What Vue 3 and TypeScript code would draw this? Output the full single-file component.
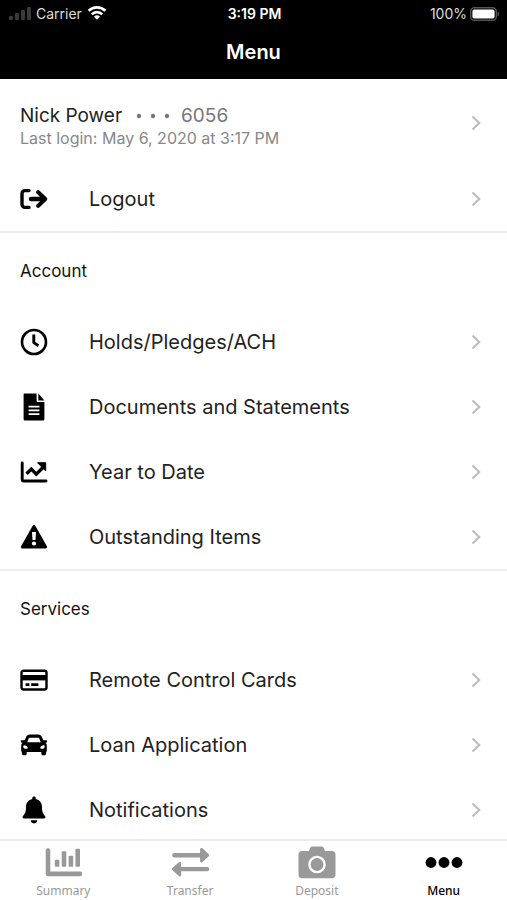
<script setup lang="ts">
import { ref } from 'vue'

type IconName = 'logout' | 'clock' | 'document' | 'chart' | 'warning' | 'card' | 'car' | 'bell'

interface MenuItem {
  label: string
  icon: IconName
}

interface MenuSection {
  title: string
  items: MenuItem[]
}

type TabName = 'Summary' | 'Transfer' | 'Deposit' | 'Menu'

const sections: MenuSection[] = [
  { title: '', items: [{ label: 'Logout', icon: 'logout' }] },
  {
    title: 'Account',
    items: [
      { label: 'Holds/Pledges/ACH', icon: 'clock' },
      { label: 'Documents and Statements', icon: 'document' },
      { label: 'Year to Date', icon: 'chart' },
      { label: 'Outstanding Items', icon: 'warning' },
    ],
  },
  {
    title: 'Services',
    items: [
      { label: 'Remote Control Cards', icon: 'card' },
      { label: 'Loan Application', icon: 'car' },
      { label: 'Notifications', icon: 'bell' },
    ],
  },
]

const tabs: TabName[] = ['Summary', 'Transfer', 'Deposit', 'Menu']
const activeTab = ref<TabName>('Menu')
</script>

<template>
  <div class="app">
    <header class="top">
      <div class="status">
        <div class="status-left">
          <svg class="signal" viewBox="0 0 22 14" aria-hidden="true">
            <rect x="0" y="9" width="4" height="4" rx="1" />
            <rect x="6" y="6" width="4" height="7" rx="1" />
            <rect x="12" y="3" width="4" height="10" rx="1" />
            <rect x="18" y="0" width="4" height="13" rx="1" />
          </svg>
          <span>Carrier</span>
          <svg class="wifi" viewBox="0 0 20 15" aria-hidden="true">
            <path d="M1.6 4.8a12 12 0 0 1 16.8 0M4.800 8.300a7.400 7.400 0 0 1 10.400 0" fill="none" stroke="#fff" stroke-width="2.600" />
            <path d="M10 13.800l-3-3.100a4.300 4.300 0 0 1 6 0z" fill="#fff" />
          </svg>
        </div>
        <span class="time">3:19 PM</span>
        <div class="status-right">
          <span>100%</span>
          <svg class="battery" viewBox="0 0 30 14" aria-hidden="true">
            <rect x="0.7" y="0.7" width="25.6" height="12.6" rx="3.6" fill="none" stroke="#555" stroke-width="1.4" />
            <rect x="2.4" y="2.4" width="22.2" height="9.2" rx="2" fill="#fff" />
            <path d="M27.6 4.6a2.6 2.6 0 0 1 0 4.8z" fill="#555" />
          </svg>
        </div>
      </div>
      <h1>Menu</h1>
    </header>

    <main class="content">
      <button type="button" class="row profile">
        <span class="profile-text">
          <span class="name-line">
            <span>Nick Power</span>
            <span class="member">
              <svg class="mask" viewBox="0 0 34 6" aria-hidden="true">
                <circle cx="3" cy="3" r="2.2" />
                <circle cx="17" cy="3" r="2.2" />
                <circle cx="31" cy="3" r="2.2" />
              </svg>
              <span>6056</span>
            </span>
          </span>
          <span class="last-login">Last login: May 6, 2020 at 3:17 PM</span>
        </span>
        <svg class="chevron" viewBox="0 0 10 16" aria-hidden="true"><path d="M1.5 1.5L8.3 8l-6.8 6.5" /></svg>
      </button>

      <section v-for="section in sections" :key="section.title" class="section">
        <h2 v-if="section.title">{{ section.title }}</h2>
        <button v-for="item in section.items" :key="item.label" type="button" class="row">
          <svg class="icon" viewBox="0 0 28 28" aria-hidden="true">
            <g v-if="item.icon === 'logout'" fill="none" stroke="#000" stroke-linecap="round">
              <path d="M9 5.600H5a3 3 0 0 0-3 3v10.800a3 3 0 0 0 3 3h4" stroke-width="3.400" />
              <path d="M11 14h12" stroke-width="4.400" />
              <path d="M18.200 7.200l7 6.800-7 6.800" stroke-width="4" stroke-linejoin="round" />
            </g>
            <g v-else-if="item.icon === 'clock'" fill="none" stroke="#000">
              <circle cx="14" cy="14" r="12" stroke-width="2.6" />
              <path d="M13.8 6.500v8.100l4.6 3.200" stroke-width="2.900" />
            </g>
            <g v-else-if="item.icon === 'document'">
              <path d="M5 .6h11.6v7.2c0 .8.5 1.3 1.3 1.3h6.5v16.8c0 .9-.5 1.5-1.4 1.5H5c-.9 0-1.4-.6-1.4-1.5V2C3.600 1.100 4.100.6 5 .6z" />
              <path d="M18.300.6l6.100 6.800h-6.100z" />
              <path d="M8.600 13.600h10.800M8.600 17.400h10.800M8.600 21.200h10.800" stroke="#fff" stroke-width="1.700" />
            </g>
            <g v-else-if="item.icon === 'chart'" fill="none" stroke="#000">
              <path d="M2.200 5v16.500c0 1 .5 1.500 1.500 1.500H26" stroke-width="2.900" stroke-linecap="round" />
              <path d="M6.600 15.800l4.700-4.700 5 5 6.400-6.400" stroke-width="3.400" />
              <path d="M17.500 4.700h8.200v8.200z" fill="#000" stroke-width="1" stroke-linejoin="round" />
            </g>
            <g v-else-if="item.icon === 'warning'">
              <path d="M14 3.500L25.600 24H2.400z" stroke="#000" stroke-width="3" stroke-linejoin="round" />
              <path d="M12 9h4l-.5 8h-3z" fill="#fff" />
              <circle cx="14" cy="20.500" r="2.100" fill="#fff" />
            </g>
            <g v-else-if="item.icon === 'card'">
              <rect x="1.500" y="4.700" width="25" height="18.800" rx="2" fill="none" stroke="#000" stroke-width="2.400" />
              <path d="M1 9h26v5.400H1z" />
              <path d="M5.600 18.600h3.800M11.200 18.600h7.200" stroke="#000" stroke-width="2.600" />
            </g>
            <g v-else-if="item.icon === 'car'">
              <path d="M1.600 9.200h3.100l1.200-2.800c.8-2 2-2.800 4-2.800h8.200c2 0 3.200.8 4 2.800l1.200 2.800h3.100c.9 0 1.100 1.900.2 2.200l-1.300.4c1 .8 1.500 1.700 1.500 3v4.600c0 .7-.2 1.200-.7 1.600v1.400c0 1.100-.7 1.800-1.800 1.800h-1.200c-1.100 0-1.800-.7-1.800-1.800V21H6.700v1.400c0 1.100-.7 1.800-1.800 1.800H3.700c-1.100 0-1.800-.7-1.800-1.800V21c-.5-.4-.7-.9-.7-1.600v-4.600c0-1.300.5-2.200 1.500-3l-1.300-.4c-.9-.3-.7-2.200.2-2.200z" />
              <path d="M7.200 11.200l1.400-3.500c.3-.7.7-1 1.500-1h7.800c.8 0 1.200.3 1.500 1l1.400 3.500zM4 14.200c2 0 3.700 1.300 3.700 2.500 0 1-.7 1.100-1.700 1.100-1.600 0-2.700-.6-2.700-2 0-.9.200-1.300.7-1.600zM24 14.200c-2 0-3.700 1.300-3.700 2.500 0 1 .7 1.100 1.700 1.100 1.600 0 2.700-.6 2.700-2 0-.9-.2-1.300-.7-1.600z" fill="#fff" />
            </g>
            <g v-else>
              <path d="M14 .6c1 0 1.700.7 1.700 1.600v.9c3.900.8 6.300 3.700 6.300 7.900 0 5 1.200 7 3 9 .9 1 .4 2.600-1.100 2.600H4.100c-1.500 0-2-1.600-1.100-2.600 1.800-2 3-4 3-9 0-4.200 2.400-7.100 6.300-7.900v-.9c0-.9.700-1.600 1.700-1.600zM10.700 24.300h6.600c0 1.800-1.400 3.100-3.300 3.100s-3.300-1.300-3.300-3.100z" />
            </g>
          </svg>
          <span class="label">{{ item.label }}</span>
          <svg class="chevron" viewBox="0 0 10 16" aria-hidden="true"><path d="M1.500 1.500L8.300 8l-6.800 6.500" /></svg>
        </button>
      </section>
    </main>

    <nav class="tabs">
      <button
        v-for="tab in tabs"
        :key="tab"
        type="button"
        class="tab"
        :class="{ active: tab === activeTab }"
        :aria-current="tab === activeTab ? 'page' : undefined"
        @click="activeTab = tab"
      >
        <svg viewBox="0 0 38 34" aria-hidden="true">
          <g v-if="tab === 'Summary'" fill="none" stroke="currentColor">
            <path d="M4 4.600V27.900h32" stroke-width="4.600" stroke-linecap="round" stroke-linejoin="round" />
            <g fill="currentColor" stroke="none">
              <rect x="10.800" y="13.800" width="4.600" height="7" rx="1" />
              <rect x="17.700" y="5.200" width="4.600" height="15.600" rx="1" />
              <rect x="24.600" y="9.800" width="4.600" height="11" rx="1" />
              <rect x="31.400" y="2.800" width="4.600" height="18" rx="1" />
            </g>
          </g>
          <g v-else-if="tab === 'Transfer'" fill="currentColor" stroke="currentColor" stroke-linejoin="round" stroke-linecap="round">
            <path d="M3.400 9.200H30M9 23.100h27" stroke-width="4.400" />
            <path d="M30.500 3.400l6.400 5.800-6.400 5.800zM8.800 17.300l-6.400 5.800 6.400 5.800z" stroke-width="2.800" />
          </g>
          <g v-else-if="tab === 'Deposit'">
            <path d="M4 5h7l1.300-3.200C12.700.8 13.400.4 14.400.4h9.200c1 0 1.700.4 2.100 1.400L27 5h7c2.200 0 3.500 1.300 3.500 3.500v20.300c0 2.200-1.300 3.500-3.500 3.500H4C1.800 32.300.5 31 .5 28.800V8.500C.5 6.300 1.800 5 4 5z" fill="currentColor" />
            <circle cx="19" cy="18.500" r="7.600" fill="none" stroke="#fff" stroke-width="2.400" />
          </g>
          <g v-else fill="currentColor">
            <circle cx="6" cy="16.500" r="5.400" />
            <circle cx="19" cy="16.500" r="5.400" />
            <circle cx="32" cy="16.500" r="5.400" />
          </g>
        </svg>
        <span>{{ tab }}</span>
      </button>
    </nav>
  </div>
</template>

<style>
body {
  margin: 0;
}
</style>

<style scoped>
.app {
  display: flex;
  flex-direction: column;
  height: 100vh;
  background: #fff;
  color: #222;
  font-family: Inter, 'Liberation Sans', sans-serif;
}

button {
  margin: 0;
  border: 0;
  background: none;
  color: inherit;
  font: inherit;
  text-align: left;
  cursor: pointer;
}

.top {
  flex: none;
  padding-bottom: 11px;
  background: #000;
  color: #fff;
}

.status {
  display: grid;
  grid-template-columns: 1fr auto 1fr;
  align-items: center;
  height: 27px;
  padding: 0 7px 0 9px;
  font-size: 14px;
}

.status-left,
.status-right {
  display: flex;
  align-items: center;
  color: #ddd;
}

.status-left {
  gap: 5px;
}

.status-right {
  justify-content: flex-end;
  gap: 3px;
}

.time {
  font-weight: 600;
}

.signal {
  width: 22px;
  height: 14px;
  fill: #3a3a3a;
}

.wifi {
  width: 20px;
  height: 15px;
}

.battery {
  width: 30px;
  height: 14px;
}

h1 {
  margin: 0;
  padding-top: 9px;
  font-size: 20px;
  font-weight: 600;
  line-height: 32px;
  text-align: center;
}

.content {
  flex: 1;
  min-height: 0;
  overflow-y: auto;
  scrollbar-width: none;
}

.row {
  display: flex;
  align-items: center;
  width: 100%;
  height: 65px;
  padding: 0 26px 0 20px;
  font-size: 20px;
}

.profile {
  height: 87px;
}

.profile-text {
  display: flex;
  flex: 1;
  flex-direction: column;
  padding-top: 6px;
}

.name-line {
  display: flex;
  gap: 14px;
  font-size: 19px;
  line-height: 24px;
}

.member {
  display: flex;
  align-items: center;
  gap: 11px;
  color: #777;
}

.mask {
  width: 34px;
  height: 6px;
  fill: #777;
}

.last-login {
  color: #888;
  font-size: 16px;
  line-height: 20px;
}

.icon {
  flex: none;
  width: 28px;
  height: 28px;
  margin-right: 41px;
}

.label {
  flex: 1;
}

.chevron {
  flex: none;
  width: 10px;
  height: 16px;
  fill: none;
  stroke: #bbb;
  stroke-width: 2;
}

.section {
  border-bottom: 2px solid #ececec;
}

.section:last-child {
  border-bottom: 0;
}

h2 {
  margin: 0;
  padding: 0 20px;
  color: #111;
  font-size: 17px;
  font-weight: 400;
  line-height: 76px;
}

.tabs {
  display: grid;
  flex: none;
  grid-template-columns: repeat(4, 1fr);
  border-top: 2px solid #ececec;
  background: #fff;
}

.tab {
  display: flex;
  flex-direction: column;
  align-items: center;
  gap: 2px;
  padding: 5px 0 0;
  color: #999;
  font-family: 'Noto Sans', sans-serif;
  font-size: 12px;
  line-height: 18px;
}

.tab svg {
  width: 38px;
  height: 34px;
}

.tab.active {
  color: #000;
  font-weight: 500;
}
</style>
